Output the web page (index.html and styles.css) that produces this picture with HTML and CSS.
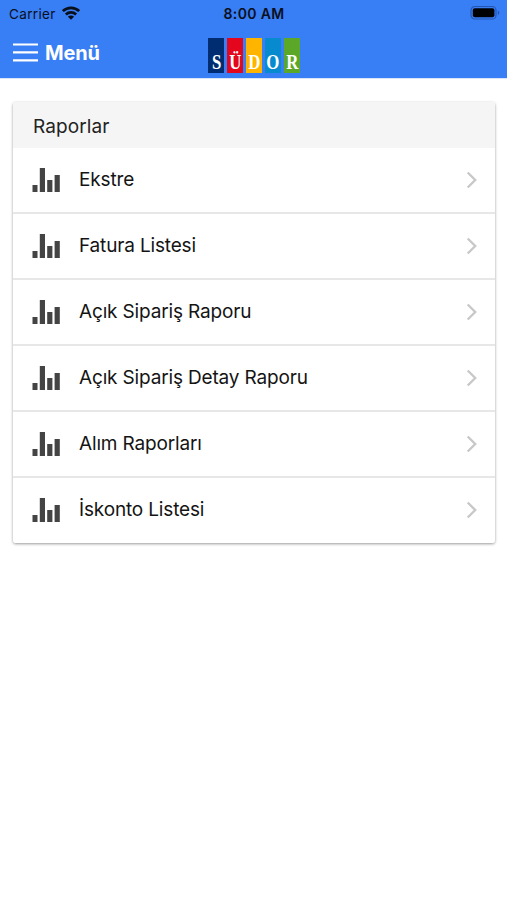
FILE: index.html
```html
<!DOCTYPE html>
<html lang="tr">
<head>
<meta charset="utf-8">
<meta name="viewport" content="width=device-width, initial-scale=1">
<title>Raporlar</title>
<link rel="stylesheet" href="styles.css">
</head>
<body>
<svg class="defs" width="0" height="0" aria-hidden="true">
  <symbol id="bars" viewBox="0 0 28 24"><path d="M.5 17h5v7h-5zM7.8 0h5.2v24H7.8zM15.2 12h5.2v12h-5.2zM22.6 7h5.2v17h-5.2z"/></symbol>
  <symbol id="chevron" viewBox="0 0 12 18"><path d="M1.7 1.5 9.2 9 1.7 16.5" fill="none" stroke="#c8c8c8" stroke-width="2.4"/></symbol>
</svg>
<header class="top">
  <div class="status">
    <div class="carrier"><span>Carrier</span>
      <svg width="18" height="14" viewBox="0 0 18 14" fill="none" stroke="#0a0f1c" stroke-width="2.8"><path d="M.8 5.1a11.8 11.8 0 0 1 16.4 0M3.9 8.5a7.3 7.3 0 0 1 10.2 0"/><path d="M9 13.7 5.9 10.8a4.2 4.2 0 0 1 6.2 0z" fill="#0a0f1c" stroke="none"/></svg>
    </div>
    <span class="time">8:00 AM</span>
    <svg class="battery" width="30" height="16" viewBox="0 0 30 16"><rect x="1" y="1.5" width="25" height="12.5" rx="3.8" fill="none" stroke="#2456b0" stroke-width="1.2"/><rect x="2.8" y="3.3" width="21.6" height="9" rx="2" fill="#000"/><path d="M27.8 5.5c2 .8 2 3.7 0 4.5z" fill="#2456b0"/></svg>
  </div>
  <div class="bar">
    <div class="menu">
      <svg width="25" height="19" viewBox="0 0 25 19"><path d="M0 1.5h25M0 9.4h25M0 17.3h25" stroke="#fff" stroke-width="2.2"/></svg>
      <span>Menü</span>
    </div>
    <div class="logo"><b class="navy"><i>S</i></b><b class="red"><i>Ü</i></b><b class="amber"><i>D</i></b><b class="blue"><i>O</i></b><b class="green"><i>R</i></b></div>
  </div>
</header>
<main class="card">
  <h1 class="title"><span>Raporlar</span></h1>
  <ul class="list">
    <li><svg class="icon"><use href="#bars"/></svg><span>Ekstre</span><svg class="chev"><use href="#chevron"/></svg></li>
    <li><svg class="icon"><use href="#bars"/></svg><span>Fatura Listesi</span><svg class="chev"><use href="#chevron"/></svg></li>
    <li><svg class="icon"><use href="#bars"/></svg><span>Açık Sipariş Raporu</span><svg class="chev"><use href="#chevron"/></svg></li>
    <li><svg class="icon"><use href="#bars"/></svg><span>Açık Sipariş Detay Raporu</span><svg class="chev"><use href="#chevron"/></svg></li>
    <li><svg class="icon"><use href="#bars"/></svg><span>Alım Raporları</span><svg class="chev"><use href="#chevron"/></svg></li>
    <li class="last"><svg class="icon"><use href="#bars"/></svg><span>İskonto Listesi</span><svg class="chev"><use href="#chevron"/></svg></li>
  </ul>
</main>
</body>
</html>
```
FILE: styles.css
```css
* { box-sizing: border-box; }
body { margin: 0; min-height: 100vh; background: #fff; color: #141414; font-family: Inter, "Liberation Sans", sans-serif; }
.defs { position: absolute; }
svg { display: block; flex: none; }
.top { height: 78px; background: #387ef5; box-shadow: 0 1px 0 #dbe5f8; }
.status { height: 27px; display: grid; grid-template-columns: 1fr auto 1fr; align-items: center; padding: 0 8px 0 9px; color: #0a0f1c; font-size: 13.5px; }
.carrier { display: flex; align-items: center; gap: 6px; letter-spacing: .35px; }
.carrier svg { margin-top: -1px; }
.time { font-weight: 600; font-size: 14px; letter-spacing: .35px; }
.battery { justify-self: end; margin: -1px -1px 0 0; }
.bar { height: 51px; display: grid; grid-template-columns: 1fr auto 1fr; padding: 0 12px 0 13px; }
.menu { display: flex; align-items: center; gap: 7px; height: 51px; color: #fff; font-size: 20px; font-weight: 700; letter-spacing: -.2px; }
.logo { display: flex; gap: 2.5px; margin-top: 11px; height: 35px; }
.logo b { width: 16.4px; height: 35px; padding-top: 14px; color: #fff; font: bold 20px/20px "Liberation Serif", serif; display: flex; justify-content: center; }
.logo i { font-style: normal; transform: scaleX(.84); }
.logo .navy { background: #002d72; }
.logo .red { background: #e3061c; }
.logo .amber { background: #ffb500; }
.logo .blue { background: #078bce; }
.logo .green { background: #5ba829; }
.card { margin: 24px 12px 0 13px; border-radius: 3px; overflow: hidden; background: #fff; box-shadow: 0 1px 3px rgba(0,0,0,.4); }
.title { margin: 0; height: 46px; padding: 0 20px; background: #f5f5f5; font-size: 19px; font-weight: 400; line-height: 50px; letter-spacing: .1px; color: #222; }
.list { margin: 0; padding: 0; list-style: none; }
.list li { height: 66px; display: flex; align-items: center; padding: 0 17px 0 19px; border-bottom: 2px solid #e7e7e7; font-size: 19px; letter-spacing: -.16px; }
.list .last { height: 65px; padding-top: 1px; border-bottom-color: #fff; }
.list span { flex: 1; margin: 0 0 0 19px; line-height: 26px; }
.icon { width: 28px; height: 24px; fill: #444; }
.chev { width: 12px; height: 18px; }
```
